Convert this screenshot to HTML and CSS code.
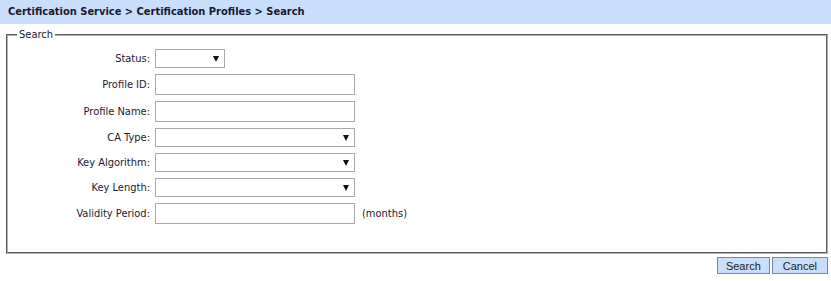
FILE: index.html
```html
<!DOCTYPE html>
<html lang="en">
<head>
    <meta charset="UTF-8">
    <title>Certification Profiles - Search</title>
    <link rel="stylesheet" href="styles.css">
</head>
<body>
    <div class="title-bar">Certification Service &gt; Certification Profiles &gt; Search</div>

    <fieldset class="search-box">
        <legend>Search</legend>
        <div class="form-grid">
            <label for="status">Status:</label>
            <div class="field"><span class="select-wrap small"><select id="status"></select></span></div>

            <label for="profile-id">Profile ID:</label>
            <div class="field tall"><input type="text" id="profile-id"></div>

            <label for="profile-name">Profile Name:</label>
            <div class="field tall"><input type="text" id="profile-name"></div>

            <label for="ca-type">CA Type:</label>
            <div class="field"><span class="select-wrap"><select id="ca-type"></select></span></div>

            <label for="key-alg">Key Algorithm:</label>
            <div class="field"><span class="select-wrap"><select id="key-alg"></select></span></div>

            <label for="key-length">Key Length:</label>
            <div class="field"><span class="select-wrap"><select id="key-length"></select></span></div>

            <label for="validity">Validity Period:</label>
            <div class="field tall"><input type="text" id="validity"><span class="unit">(months)</span></div>
        </div>
    </fieldset>

    <div class="buttons">
        <button type="button">Search</button><button type="button" class="wide">Cancel</button>
    </div>
</body>
</html>
```

FILE: styles.css
```css
body {
    margin: 0;
    font-family: Tahoma, "DejaVu Sans Condensed", "DejaVu Sans", sans-serif;
    font-size: 11px;
    color: #1a1a2e;
    background: #fff;
}
.title-bar {
    height: 24px;
    line-height: 24px;
    padding-left: 8px;
    background: #c9defa;
    font-weight: bold;
}
.search-box {
    margin: 4px 3px 0 6px;
    padding: 0 0 25px 0;
    border: 2px groove #b0b0b0;
    min-width: 0;
}
.search-box legend {
    padding: 0 2px;
    margin-left: 9px;
}
.form-grid {
    display: grid;
    grid-template-columns: 142px auto;
    column-gap: 5px;
    margin-top: 5px;
}
.form-grid label {
    text-align: right;
    align-self: center;
}
.field {
    height: 25px;
    display: flex;
    align-items: center;
}
.field.tall {
    height: 27px;
}
input[type="text"] {
    box-sizing: border-box;
    width: 200px;
    height: 21px;
    border: 1px solid #a9a9a9;
    margin: 0;
    padding: 1px 3px;
    font: inherit;
}
.unit {
    margin-left: 7px;
}
.select-wrap {
    position: relative;
    display: inline-block;
}
.select-wrap select {
    box-sizing: border-box;
    width: 200px;
    height: 19px;
    border: 1px solid #a9a9a9;
    border-radius: 0;
    background: #fff;
    margin: 0;
    -webkit-appearance: none;
    appearance: none;
    display: block;
}
.select-wrap.small select {
    width: 70px;
}
.select-wrap::after {
    content: "";
    position: absolute;
    right: 6px;
    top: 7px;
    border-left: 3.5px solid transparent;
    border-right: 3.5px solid transparent;
    border-top: 6px solid #111;
}
.buttons {
    display: flex;
    justify-content: flex-end;
    gap: 2px;
    margin: 3px 3px 0 0;
}
.buttons button {
    height: 17px;
    padding: 0 8px;
    font-family: "Liberation Sans", Arial, sans-serif;
    font-size: 11px;
    color: #222;
    background: #c9defa;
    border: 1px solid #7d8799;
    border-radius: 0;
}
.buttons button.wide {
    padding: 0 10px;
}
```
